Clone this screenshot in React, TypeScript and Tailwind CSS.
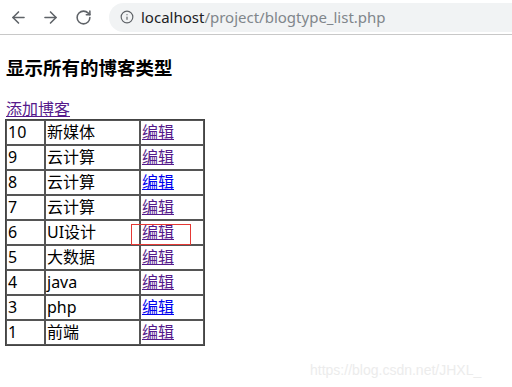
import { ArrowLeft, ArrowRight, RotateCw, Info } from "lucide-react";

const rows = [
  { id: "10", name: "新媒体", visited: true },
  { id: "9", name: "云计算", visited: true },
  { id: "8", name: "云计算", visited: false },
  { id: "7", name: "云计算", visited: true },
  { id: "6", name: "UI设计", visited: true },
  { id: "5", name: "大数据", visited: true },
  { id: "4", name: "java", visited: true },
  { id: "3", name: "php", visited: false },
  { id: "1", name: "前端", visited: true },
];

export default function App() {
  return (
    <div
      className="relative w-[512px] h-[387px] overflow-hidden bg-white text-black"
      style={{ fontFamily: '"Noto Sans", "Noto Sans CJK SC", sans-serif' }}
    >
      {/* browser bar */}
      <div className="flex items-center h-[35px] border-b border-[#c8c8c8] pl-[9px]">
        <ArrowLeft size={19} strokeWidth={2} className="text-[#5f6368]" />
        <ArrowRight size={19} strokeWidth={2} className="text-[#5f6368] ml-[13px]" />
        <RotateCw size={17} strokeWidth={2.2} className="text-[#5f6368] ml-[15px]" />
        <div className="flex items-center ml-[17px] h-[29px] flex-1 rounded-l-full bg-[#f1f3f4] pl-[11px]">
          <Info size={14} strokeWidth={2} className="text-[#5f6368]" />
          <span className="ml-[7px] text-[15px] leading-none text-[#202124]">localhost</span>
          <span className="text-[15px] leading-none text-[#80868b]">/project/blogtype_list.php</span>
        </div>
      </div>

      <div className="pl-[6px]">
        <h3 className="mt-[21px] text-[18.5px] font-bold leading-[24px]">显示所有的博客类型</h3>
        <a className="block mt-[20px] text-[16px] leading-[19px] text-[#551a8b] underline">添加博客</a>
        <table className="table-fixed border-separate border-spacing-0 border border-[#444] w-[200px] -ml-px text-[16px]">
          <colgroup>
            <col className="w-[39px]" />
            <col className="w-[95px]" />
            <col className="w-[64px]" />
          </colgroup>
          <tbody>
            {rows.map((r) => (
              <tr key={r.id}>
                <td className="border border-[#555] p-px h-[25px] leading-[21px]">{r.id}</td>
                <td className="border border-[#555] p-px h-[25px] leading-[21px]">{r.name}</td>
                <td className="border border-[#555] p-px h-[25px] leading-[21px]">
                  <a className={r.visited ? "text-[#551a8b] underline" : "text-[#0000ee] underline"}>编辑</a>
                </td>
              </tr>
            ))}
          </tbody>
        </table>
      </div>

      {/* red highlight box */}
      <div className="absolute left-[131px] top-[224px] w-[60px] h-[21px] border border-[#e53935]" />

      {/* watermark */}
      <div
        className="absolute left-[310px] top-[360px] text-[14px] text-[#ececec]"
        style={{ fontFamily: '"Liberation Sans", sans-serif' }}
      >
        https://blog.csdn.net/JHXL_
      </div>
    </div>
  );
}
